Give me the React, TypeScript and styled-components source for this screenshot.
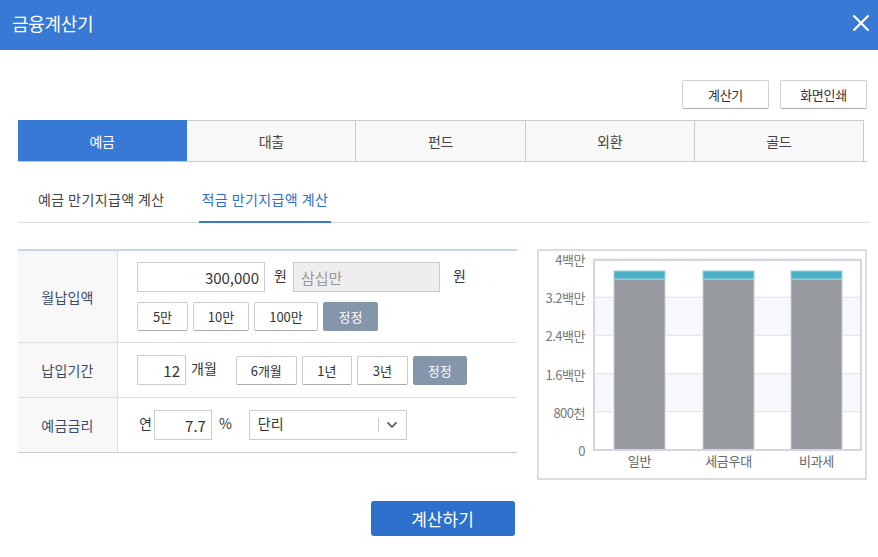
import * as React from 'react';
import styled, { createGlobalStyle } from 'styled-components';

const GlobalStyle = createGlobalStyle`
  body {
    margin: 0;
    background: #fff;
    font-family: "Noto Sans CJK KR", "Noto Sans", sans-serif;
    color: #333;
  }
  * { box-sizing: border-box; }
`;

const Header = styled.div`
  height: 50px;
  background: #3779d4;
  display: flex;
  align-items: center;
  justify-content: space-between;
  padding: 0 7px 4px 12px;
`;
const Title = styled.h1`
  margin: 0;
  font-size: 18px;
  font-weight: 400;
  color: #fff;
  letter-spacing: -0.3px;
`;
const Close = styled.button`
  border: 0;
  background: none;
  padding: 0;
  width: 20px;
  height: 20px;
  display: flex;
  align-items: center;
  justify-content: center;
`;

const Body = styled.div`
  padding: 30px 11px 0 18px;
`;

const Actions = styled.div`
  display: flex;
  justify-content: flex-end;
  gap: 11px;
  margin-bottom: 11px;
`;
const ActionButton = styled.button`
  width: 87px;
  height: 29px;
  background: #fff;
  border: 1px solid #d2d2d2;
  border-bottom-color: #aaa;
  border-radius: 2px;
  font-family: inherit;
  font-size: 13px;
  color: #333;
  letter-spacing: -0.3px;
`;

const Tabs = styled.div`
  display: grid;
  grid-template-columns: repeat(5, 169.2px);
  border-bottom: 1px solid #ccc;
`;
const Tab = styled.div<{ $active?: boolean }>`
  height: 41px;
  display: flex;
  align-items: center;
  justify-content: center;
  font-size: 14px;
  letter-spacing: -0.3px;
  background: ${p => (p.$active ? '#3779d4' : '#f8f8f8')};
  color: ${p => (p.$active ? '#fff' : '#444')};
  border-top: 1px solid ${p => (p.$active ? '#3779d4' : '#ccc')};
  border-right: 1px solid ${p => (p.$active ? '#3779d4' : '#ccc')};
`;

const SubTabs = styled.div`
  display: flex;
  align-items: flex-end;
  height: 61px;
  border-bottom: 1px solid #ddd;
  margin-right: -3px;
  gap: 31px;
  padding-left: 17px;
`;
const SubTab = styled.div<{ $active?: boolean }>`
  padding: 0 3px 12px;
  font-size: 14px;
  letter-spacing: 0.4px;
  color: ${p => (p.$active ? '#2d70cc' : '#444')};
  margin-bottom: -1px;
  border-bottom: 2px solid ${p => (p.$active ? '#3779d4' : 'transparent')};
`;

const Content = styled.div`
  display: flex;
  align-items: flex-start;
  gap: 20px;
  margin-top: 26px;
`;

const FormTable = styled.div`
  width: 499px;
  border-top: 2px solid #c6d6ef;
  border-bottom: 1px solid #c9c9d6;
`;
const Row = styled.div<{ $h: number }>`
  display: grid;
  grid-template-columns: 100px 1fr;
  height: ${p => p.$h}px;
  & + & { border-top: 1px solid #ddd; }
`;
const Label = styled.div`
  background: #f8f8f8;
  border-right: 1px solid #ddd;
  display: flex;
  align-items: center;
  justify-content: center;
  font-size: 14px;
  color: #3c4a6a;
  letter-spacing: 0.2px;
`;
const Cell = styled.div<{ $top?: number }>`
  padding: ${p => (p.$top != null ? `${p.$top}px` : '0')} 0 0 19px;
  display: flex;
  flex-direction: column;
  justify-content: ${p => (p.$top != null ? 'flex-start' : 'center')};
  gap: 10px;
`;
const Line = styled.div`
  display: flex;
  align-items: center;
`;
const Input = styled.div<{ $w: number; $disabled?: boolean }>`
  width: ${p => p.$w}px;
  height: 30px;
  border: 1px solid #ccc;
  background: ${p => (p.$disabled ? '#eee' : '#fff')};
  color: ${p => (p.$disabled ? '#999' : '#333')};
  font-size: 15px;
  display: flex;
  align-items: center;
  justify-content: ${p => (p.$disabled ? 'flex-start' : 'flex-end')};
  padding: 0 5px 0 7px;
`;
const Unit = styled.span<{ $ml: number; $mr: number }>`
  font-size: 14px;
  color: #333;
  margin: 3px ${p => p.$mr}px 0 ${p => p.$ml}px;
  align-self: flex-start;
`;
const Chip = styled.button<{ $w: number; $dark?: boolean }>`
  width: ${p => p.$w}px;
  height: 29px;
  margin-right: 5px;
  padding: 0;
  font-family: inherit;
  font-size: 13px;
  border-radius: 2px;
  background: ${p => (p.$dark ? '#8595aa' : '#fff')};
  color: ${p => (p.$dark ? '#fff' : '#333')};
  border: 1px solid ${p => (p.$dark ? '#8595aa' : '#ccc')};
  border-bottom-color: ${p => (p.$dark ? '#8595aa' : '#aaa')};
`;
const Select = styled.div`
  width: 158px;
  height: 30px;
  border: 1px solid #ccc;
  display: flex;
  align-items: center;
  padding-left: 8px;
  font-size: 14px;
  color: #333;
`;
const SelectText = styled.span`
  flex: 1;
  margin-top: -4px;
`;
const SelectArrow = styled.span`
  width: 28px;
  height: 14px;
  border-left: 1px solid #ccc;
  display: flex;
  align-items: center;
  justify-content: center;
`;

const ChartBox = styled.div`
  width: 330px;
  height: 231px;
  border: 2px solid #ddd;
`;

const Footer = styled.div`
  display: flex;
  justify-content: center;
  margin-top: 21px;
`;
const CalcButton = styled.button`
  width: 144px;
  height: 35px;
  border: 0;
  border-radius: 3px;
  background: #2d70cc;
  color: #fff;
  font-family: inherit;
  font-size: 17px;
`;

const yLabels = ['4백만', '3.2백만', '2.4백만', '1.6백만', '800천', '0'];
const bars = [
  { name: '일반', x: 75 },
  { name: '세금우대', x: 164 },
  { name: '비과세', x: 252 },
];

const Chart = () => {
  const top = 8;
  const bottom = 199;
  const step = (bottom - top) / 5;
  return (
    <svg width="326" height="227" viewBox="0 0 326 227">
      <rect x="54" y={top + step} width="269" height={step} fill="#f7f8fc" />
      <rect x="54" y={top + step * 3} width="269" height={step} fill="#f7f8fc" />
      {yLabels.map((l, i) => (
        <g key={l}>
          <line x1="54" x2="323" y1={top + step * i} y2={top + step * i} stroke="#e2e2e8" strokeWidth="1" />
          <text
            x="46"
            y={top + step * i + 6}
            textAnchor="end"
            fontSize="13"
            fill="#777"
            fontFamily="Noto Sans CJK KR, sans-serif"
            letterSpacing="-0.5"
          >
            {l}
          </text>
        </g>
      ))}
      {bars.map(b => (
        <g key={b.name}>
          <rect x={b.x} y="28" width="51" height={bottom - 28} fill="#969a9e" stroke="#c9cdd4" strokeWidth="1" />
          <rect x={b.x} y="20" width="51" height="8" fill="#4bafc6" stroke="#9ad3e0" strokeWidth="1" />
          <text
            x={b.x + 25.5}
            y="215"
            textAnchor="middle"
            fontSize="13"
            fill="#666"
            fontFamily="Noto Sans CJK KR, sans-serif"
            letterSpacing="-0.3"
          >
            {b.name}
          </text>
        </g>
      ))}
      <rect x="55" y={top + 1} width="267" height={bottom - top - 1} fill="none" stroke="#d3d5e2" strokeWidth="2" />
    </svg>
  );
};

const App = () => (
  <>
    <GlobalStyle />
    <Header>
      <Title>금융계산기</Title>
      <Close aria-label="close">
        <svg width="18" height="18" viewBox="0 0 18 18">
          <path d="M1.5 1.5 L16.5 16.5 M16.5 1.5 L1.5 16.5" stroke="#fff" strokeWidth="2.2" />
        </svg>
      </Close>
    </Header>
    <Body>
      <Actions>
        <ActionButton>계산기</ActionButton>
        <ActionButton>화면인쇄</ActionButton>
      </Actions>
      <Tabs>
        <Tab $active>예금</Tab>
        <Tab>대출</Tab>
        <Tab>펀드</Tab>
        <Tab>외환</Tab>
        <Tab>골드</Tab>
      </Tabs>
      <SubTabs>
        <SubTab>예금 만기지급액 계산</SubTab>
        <SubTab $active>적금 만기지급액 계산</SubTab>
      </SubTabs>
      <Content>
        <FormTable>
          <Row $h={91}>
            <Label>월납입액</Label>
            <Cell $top={11}>
              <Line>
                <Input $w={128}>300,000</Input>
                <Unit $ml={9} $mr={6}>원</Unit>
                <Input $w={147} $disabled>삼십만</Input>
                <Unit $ml={13} $mr={0}>원</Unit>
              </Line>
              <Line>
                <Chip $w={51}>5만</Chip>
                <Chip $w={56}>10만</Chip>
                <Chip $w={64}>100만</Chip>
                <Chip $w={55} $dark>정정</Chip>
              </Line>
            </Cell>
          </Row>
          <Row $h={55}>
            <Label>납입기간</Label>
            <Cell>
              <Line>
                <Input $w={49}>12</Input>
                <Unit $ml={5} $mr={19}>개월</Unit>
                <Chip $w={61}>6개월</Chip>
                <Chip $w={50}>1년</Chip>
                <Chip $w={51}>3년</Chip>
                <Chip $w={54} $dark>정정</Chip>
              </Line>
            </Cell>
          </Row>
          <Row $h={55}>
            <Label>예금금리</Label>
            <Cell>
              <Line>
                <Unit $ml={2} $mr={2}>연</Unit>
                <Input $w={58}>7.7</Input>
                <Unit $ml={7} $mr={17}>%</Unit>
                <Select>
                  <SelectText>단리</SelectText>
                  <SelectArrow>
                    <svg width="12" height="8" viewBox="0 0 12 8">
                      <path d="M1.5 1.5 L6 6 L10.5 1.5" fill="none" stroke="#666" strokeWidth="1.8" />
                    </svg>
                  </SelectArrow>
                </Select>
              </Line>
            </Cell>
          </Row>
        </FormTable>
        <ChartBox>
          <Chart />
        </ChartBox>
      </Content>
      <Footer>
        <CalcButton>계산하기</CalcButton>
      </Footer>
    </Body>
  </>
);

export default App;
